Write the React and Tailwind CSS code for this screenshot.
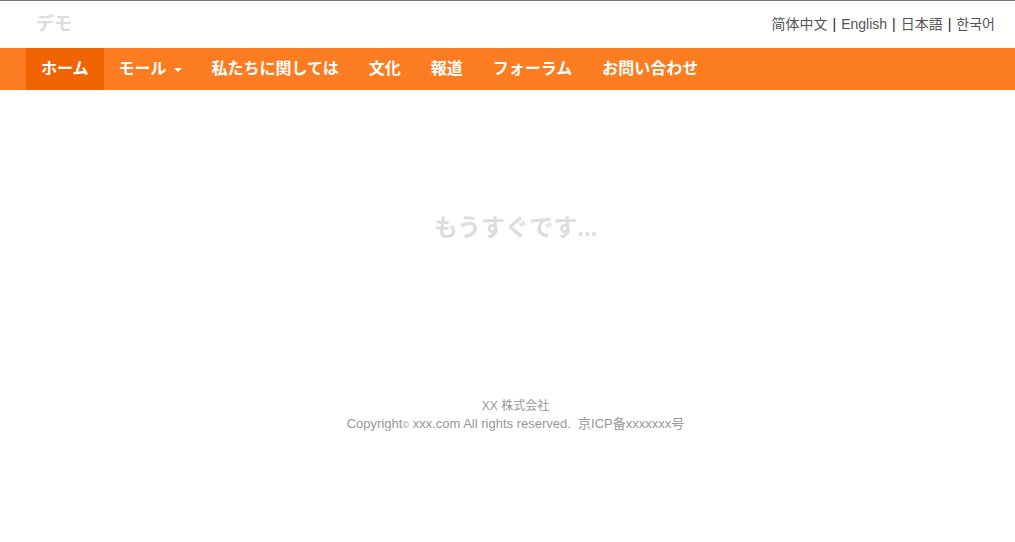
const font = {
  fontFamily: '"Liberation Sans", "Noto Sans CJK JP", sans-serif',
};

const navItems = [
  { label: "ホーム", active: true },
  { label: "モール", caret: true },
  { label: "私たちに関しては" },
  { label: "文化" },
  { label: "報道" },
  { label: "フォーラム" },
  { label: "お問い合わせ" },
];

const langs = ["简体中文", "English", "日本語", "한국어"];

export default function App() {
  return (
    <div className="min-h-[542px] bg-white" style={font}>
      <header className="flex h-[48px] items-center justify-between border-t border-[#777] pl-[36px] pr-[20px]">
        <span className="text-[18px] font-bold text-[#dcdcdc]">デモ</span>
        <div className="flex items-center text-[14px] text-[#555]">
          {langs.map((lang, i) => (
            <span key={lang} className="flex items-center">
              {i > 0 && <span className="mx-[5px] text-[#222]">|</span>}
              <a className="cursor-pointer">{lang}</a>
            </span>
          ))}
        </div>
      </header>

      <nav className="flex h-[42px] bg-[#fb7c21] pl-[26px]">
        {navItems.map((item) => (
          <a
            key={item.label}
            className={`flex items-center px-[15px] text-[16px] font-bold text-white ${
              item.active ? "bg-[#f06404]" : ""
            }`}
          >
            {item.label}
            {item.caret && (
              <span className="ml-[7px] mt-[2px] h-0 w-0 border-x-[4px] border-t-[4px] border-x-transparent border-t-white" />
            )}
          </a>
        ))}
      </nav>

      <main className="flex h-[276px] items-center justify-center pl-[16px]">
        <h2 className="text-[24px] font-bold text-[#dddddd]">もうすぐです...</h2>
      </main>

      <footer className="mt-[31px] pl-[16px] text-center leading-[18px] text-[#999]">
        <p className="text-[12px]">XX 株式会社</p>
        <p className="text-[13px]">
          Copyright<span className="text-[9px]">©</span> xxx.com All rights reserved.&nbsp;&nbsp;京ICP备xxxxxxx号
        </p>
      </footer>
    </div>
  );
}
